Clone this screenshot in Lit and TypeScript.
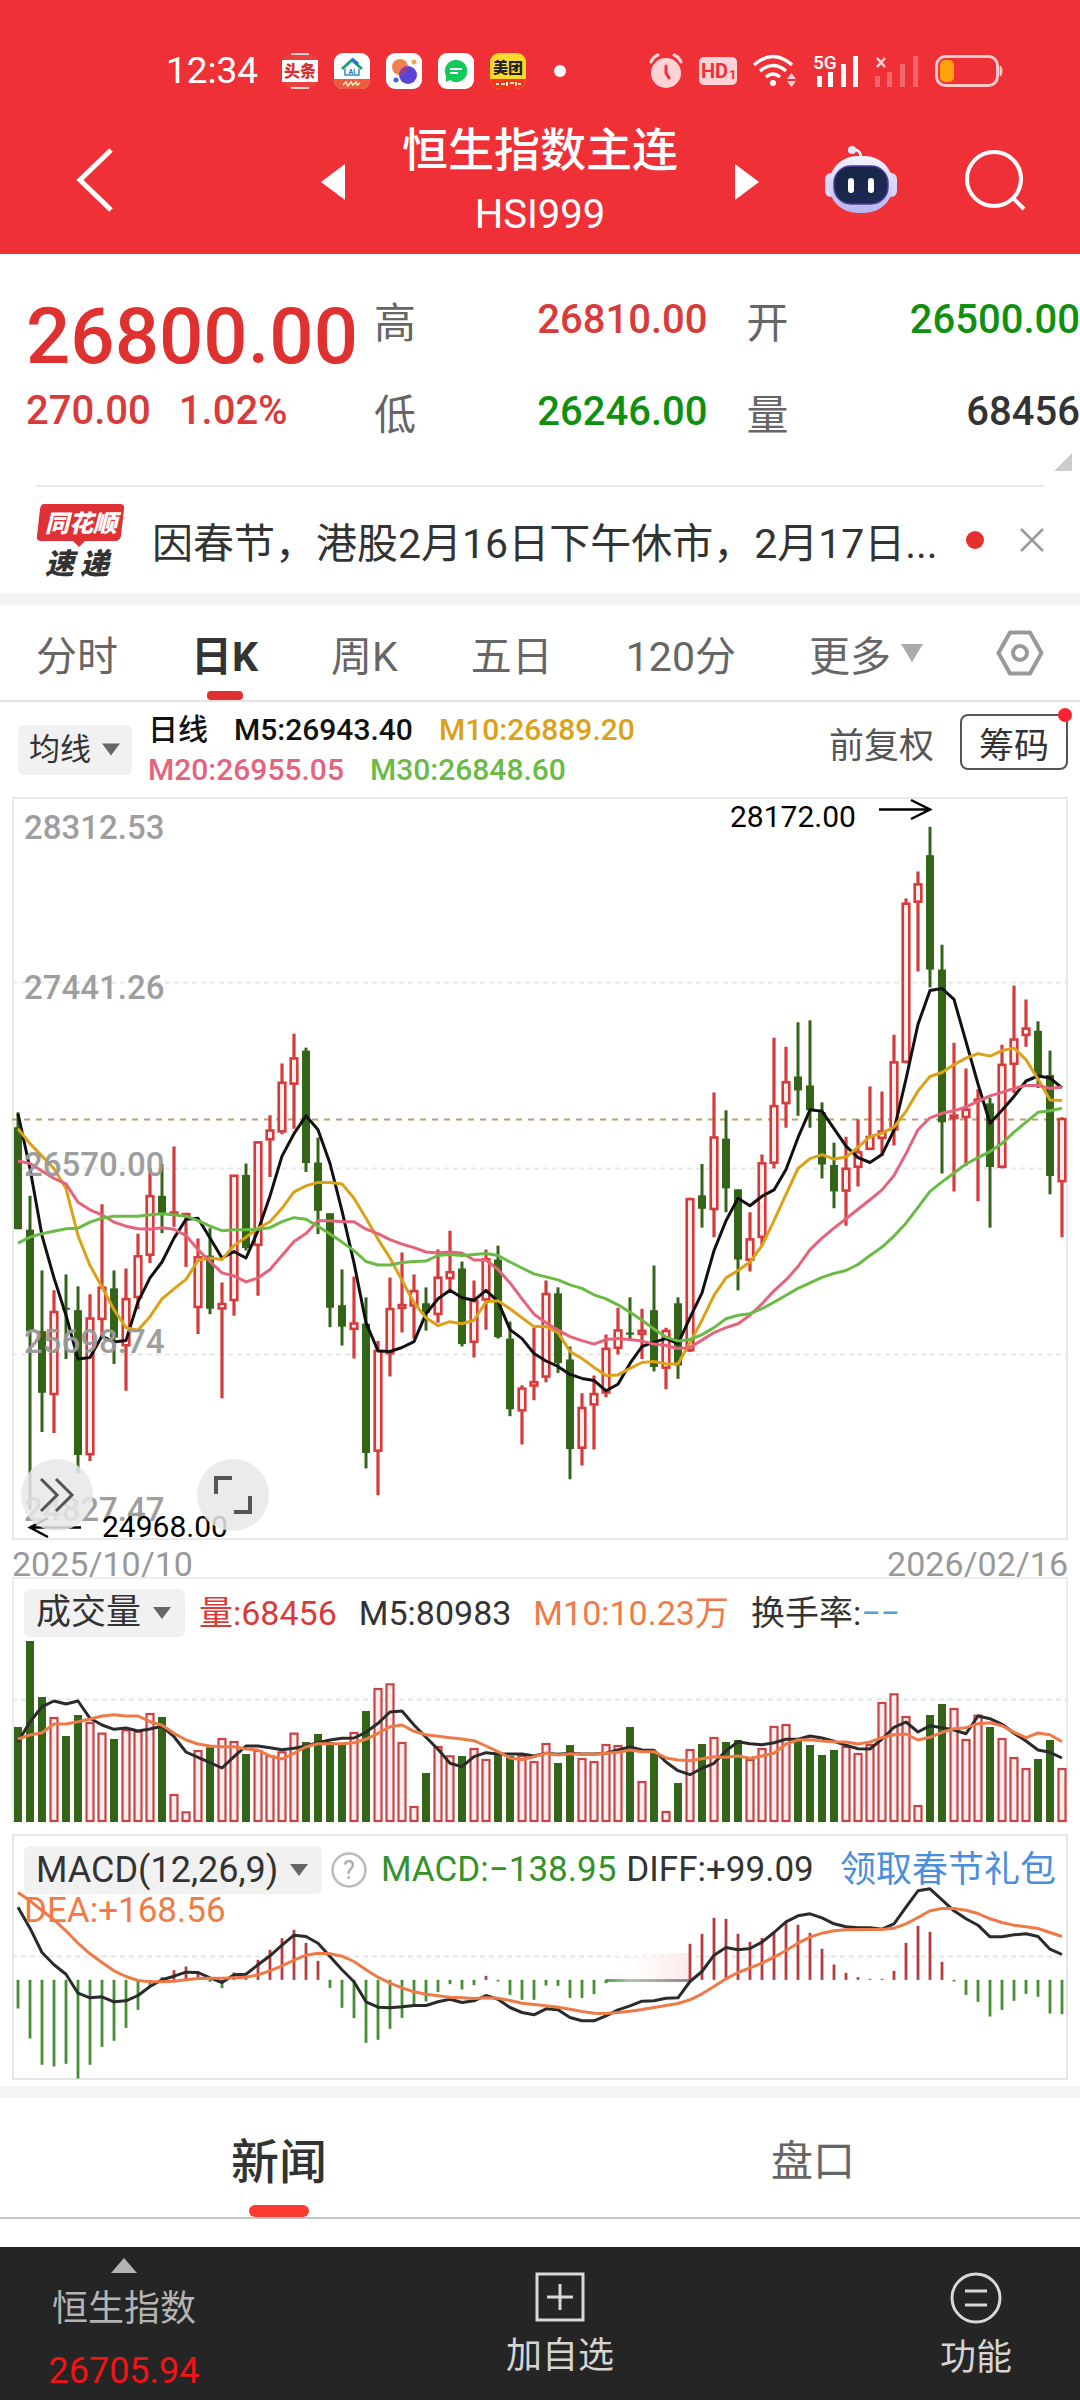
import { LitElement, html, svg, css } from "lit";
import { customElement, state } from "lit/decorators.js";

type Dir = "u" | "d";
type Candle = [Dir, number, number, number, number];

const STEP = 12;
const FIRST = 6;
const cx = (i: number) => FIRST + i * STEP;

/* direction, high, body top, body bottom, low, in plot units */
const CANDLES: Candle[] = [
  ["d", 667, 697, 902, 902], ["d", 835, 903, 1107, 1465], ["d", 985, 1107, 1231, 1310], ["u", 1025, 1067, 1235, 1312],
  ["d", 993, 1060, 1064, 1163], ["d", 1017, 1065, 1356, 1392], ["u", 1033, 1080, 1356, 1368], ["u", 852, 1018, 1084, 1120],
  ["d", 985, 1021, 1120, 1173], ["u", 981, 1041, 1137, 1227], ["u", 911, 955, 1040, 1063], ["u", 780, 834, 955, 970],
  ["d", 771, 835, 870, 910], ["u", 736, 867, 870, 897], ["u", 870, 870, 876, 978], ["u", 921, 957, 1060, 1113],
  ["d", 900, 955, 1062, 1073], ["u", 1009, 1051, 1063, 1242], ["u", 793, 793, 1046, 1076], ["d", 770, 793, 940, 945],
  ["u", 725, 726, 935, 1036], ["u", 673, 702, 723, 797], ["u", 569, 606, 707, 711], ["u", 509, 557, 611, 700],
  ["d", 537, 543, 769, 787], ["d", 718, 768, 865, 912], ["d", 870, 870, 1060, 1099], ["d", 983, 1055, 1098, 1136],
  ["u", 997, 1090, 1104, 1162], ["d", 1039, 1092, 1352, 1383], ["u", 1127, 1145, 1349, 1437], ["u", 999, 1061, 1153, 1198],
  ["u", 949, 1053, 1062, 1110], ["u", 993, 1025, 1057, 1122], ["d", 1019, 1051, 1070, 1106], ["u", 943, 998, 1074, 1090],
  ["u", 905, 987, 1002, 1025], ["d", 967, 981, 1133, 1138], ["u", 1005, 1045, 1130, 1160], ["u", 943, 961, 1045, 1104],
  ["d", 935, 963, 1119, 1122], ["d", 1088, 1122, 1264, 1278], ["u", 1216, 1221, 1268, 1335], ["u", 1100, 1208, 1218, 1246],
  ["u", 1005, 1031, 1200, 1210], ["d", 1019, 1031, 1171, 1191], ["d", 1138, 1164, 1344, 1405], ["u", 1232, 1260, 1343, 1377],
  ["u", 1196, 1232, 1256, 1345], ["u", 1114, 1141, 1232, 1240], ["u", 1060, 1104, 1142, 1154], ["d", 1039, 1110, 1114, 1124],
  ["u", 1062, 1105, 1114, 1163], ["d", 975, 1065, 1179, 1188], ["u", 1100, 1105, 1182, 1224], ["d", 1039, 1051, 1176, 1203],
  ["u", 839, 840, 1147, 1149], ["d", 771, 834, 861, 899], ["u", 627, 716, 863, 918], ["d", 663, 720, 820, 868],
  ["d", 822, 822, 963, 1025], ["u", 868, 921, 965, 987], ["u", 752, 768, 919, 935], ["u", 517, 653, 770, 780],
  ["u", 535, 605, 650, 698], ["d", 486, 595, 623, 674], ["d", 482, 613, 663, 698], ["d", 647, 667, 772, 800],
  ["d", 728, 773, 826, 860], ["u", 716, 779, 826, 895], ["u", 681, 746, 778, 816], ["u", 615, 715, 742, 742],
  ["u", 625, 704, 720, 755], ["u", 511, 565, 703, 734], ["u", 237, 246, 567, 569], ["u", 183, 207, 245, 384],
  ["d", 93, 150, 380, 416], ["d", 330, 380, 687, 790], ["u", 527, 672, 680, 826], ["u", 579, 660, 678, 775],
  ["u", 620, 640, 642, 846], ["d", 638, 649, 777, 899], ["u", 531, 570, 778, 780], ["u", 412, 519, 571, 628],
  ["u", 440, 497, 513, 535], ["d", 484, 503, 594, 618], ["d", 543, 592, 795, 832], ["u", 677, 679, 807, 918],
];

const MA5 = [670, 780, 915, 1000, 1075, 1163, 1160, 1117, 1129, 1126, 1048, 1000, 968, 920, 882, 880, 920, 960, 947, 960, 905, 835, 755, 710, 674, 702, 770, 865, 970, 1090, 1147, 1148, 1140, 1128, 1072, 1042, 1025, 1040, 1045, 1025, 1047, 1104, 1122, 1152, 1167, 1178, 1194, 1202, 1206, 1227, 1214, 1172, 1138, 1129, 1122, 1132, 1080, 1030, 945, 885, 840, 855, 836, 823, 782, 718, 662, 665, 700, 735, 758, 768, 752, 703, 600, 490, 422, 418, 440, 525, 610, 689, 663, 635, 604, 594, 598, 618];
const MA10 = [700, 730, 755, 780, 820, 915, 975, 1018, 1064, 1100, 1105, 1078, 1042, 1022, 1003, 965, 960, 963, 935, 918, 900, 887, 860, 827, 815, 808, 808, 811, 840, 880, 922, 960, 1005, 1050, 1080, 1096, 1088, 1092, 1085, 1048, 1046, 1062, 1080, 1098, 1098, 1110, 1148, 1162, 1180, 1196, 1195, 1182, 1170, 1168, 1173, 1173, 1130, 1085, 1035, 1000, 985, 968, 935, 885, 832, 780, 760, 752, 761, 757, 737, 716, 709, 697, 665, 624, 595, 587, 571, 558, 549, 554, 543, 538, 561, 600, 642, 643];
const MA20 = [765, 770, 785, 800, 811, 848, 863, 873, 888, 896, 901, 902, 899, 902, 915, 943, 967, 990, 996, 1008, 1000, 983, 955, 927, 911, 885, 885, 887, 887, 902, 911, 923, 932, 939, 948, 950, 948, 950, 964, 964, 983, 1010, 1042, 1073, 1090, 1105, 1118, 1126, 1133, 1124, 1122, 1124, 1127, 1133, 1136, 1142, 1140, 1125, 1110, 1100, 1092, 1075, 1052, 1026, 1004, 977, 943, 920, 900, 881, 862, 843, 823, 794, 750, 702, 678, 669, 664, 656, 645, 634, 627, 619, 613, 613, 619, 616];
const MA30 = [930, 918, 911, 906, 901, 900, 888, 880, 876, 876, 876, 873, 871, 873, 876, 885, 896, 905, 903, 903, 902, 899, 887, 879, 882, 896, 912, 928, 945, 967, 974, 974, 969, 967, 966, 955, 953, 955, 953, 951, 955, 968, 980, 992, 998, 1004, 1014, 1021, 1034, 1042, 1054, 1069, 1085, 1103, 1119, 1127, 1124, 1114, 1100, 1082, 1075, 1072, 1062, 1049, 1035, 1021, 1010, 999, 991, 985, 973, 955, 938, 916, 890, 858, 826, 807, 789, 771, 758, 746, 730, 707, 687, 667, 664, 659];

const VOLUME = [561, 303, 471, 531, 588, 525, 546, 578, 597, 568, 572, 519, 531, 762, 814, 630, 622, 594, 603, 642, 630, 645, 634, 578, 606, 582, 606, 612, 576, 513, 444, 430, 606, 798, 699, 618, 646, 648, 624, 657, 645, 648, 645, 663, 609, 669, 615, 654, 663, 612, 615, 561, 723, 636, 813, 729, 627, 612, 591, 606, 600, 657, 624, 558, 552, 600, 615, 645, 630, 618, 639, 612, 486, 460, 528, 795, 525, 492, 504, 597, 524, 561, 594, 651, 684, 657, 600, 684];
const VOL5 = [606, 545, 500, 483, 492, 483, 535, 555, 568, 564, 573, 567, 559, 590, 636, 652, 668, 684, 650, 618, 618, 623, 629, 625, 618, 608, 600, 595, 594, 577, 550, 516, 513, 555, 592, 628, 670, 680, 650, 638, 642, 642, 642, 648, 640, 643, 640, 642, 642, 640, 630, 621, 630, 631, 666, 692, 704, 685, 670, 632, 605, 611, 614, 608, 598, 598, 588, 594, 604, 616, 626, 627, 597, 562, 546, 576, 557, 563, 570, 581, 528, 536, 553, 580, 603, 630, 637, 654];
const VOL10 = [597, 585, 578, 552, 552, 545, 537, 528, 524, 528, 528, 545, 556, 580, 600, 612, 618, 620, 620, 627, 630, 648, 657, 640, 620, 611, 611, 611, 608, 598, 580, 560, 555, 574, 584, 589, 593, 597, 602, 618, 635, 654, 659, 650, 640, 645, 641, 643, 643, 640, 637, 630, 635, 635, 654, 660, 662, 656, 650, 652, 648, 655, 648, 640, 612, 600, 599, 603, 605, 606, 612, 606, 593, 584, 582, 600, 592, 577, 566, 563, 551, 548, 557, 577, 593, 579, 584, 605];

const MACD = [566, 656, 735, 740, 732, 776, 735, 681, 663, 624, 570, 500, 472, 451, 440, 456, 486, 505, 458, 474, 420, 390, 355, 330, 369, 423, 504, 564, 595, 669, 660, 627, 594, 560, 545, 517, 493, 509, 496, 468, 485, 525, 540, 540, 497, 498, 534, 534, 523, 490, 480, 480, 480, 480, 480, 480, 372, 342, 294, 297, 342, 366, 354, 336, 309, 315, 339, 387, 434, 459, 472, 477, 477, 453, 369, 318, 336, 426, 485, 525, 546, 590, 570, 543, 522, 531, 581, 583];
const DIFF = [262, 325, 398, 435, 463, 520, 534, 531, 546, 543, 527, 500, 480, 469, 457, 458, 474, 488, 465, 463, 435, 408, 376, 346, 350, 370, 410, 450, 486, 546, 562, 564, 561, 557, 557, 546, 538, 548, 543, 527, 538, 563, 578, 585, 567, 570, 593, 603, 603, 588, 570, 558, 544, 543, 535, 534, 485, 455, 406, 383, 390, 386, 367, 338, 306, 288, 282, 294, 312, 321, 324, 324, 328, 312, 262, 213, 207, 240, 273, 297, 316, 351, 351, 345, 342, 350, 388, 404];
const DEA = [218, 243, 272, 300, 333, 370, 402, 428, 453, 470, 482, 486, 486, 484, 480, 476, 475, 475, 474, 472, 465, 453, 438, 421, 406, 400, 402, 409, 425, 450, 472, 490, 504, 516, 523, 528, 532, 534, 536, 534, 535, 542, 550, 554, 558, 562, 568, 575, 580, 581, 578, 574, 569, 563, 557, 551, 540, 522, 500, 477, 458, 444, 430, 412, 392, 370, 352, 340, 333, 330, 329, 329, 329, 325, 312, 293, 273, 266, 266, 271, 281, 297, 308, 316, 321, 326, 338, 350];

const priceY = (v: number) => ((v - 34) / 1492) * 742 + 0.5;
const volumeY = (v: number) => (v - 111) / 3;
const macdY = (v: number) => (v - 44) / 3 + 0.5;

const line = (data: number[], y: (v: number) => number) =>
  data.map((v, i) => `${cx(i)},${y(v).toFixed(1)}`).join(" ");

const shared = css`
  :host, * { box-sizing: border-box; }
  button, select {
    margin: 0; padding: 0; border: 0; background: none;
    font: inherit; color: inherit; appearance: none; cursor: pointer;
  }
  a { color: inherit; text-decoration: none; }
  svg { display: block; flex: none; overflow: visible; }
  .picker {
    display: inline-flex; align-items: center; gap: 11px;
    height: 48px; padding: 0 14px 0 12px;
    background: #f1f1f1; border-radius: 6px; color: #333;
  }
`;

const downArrow = svg`<path d="M0 0H18L9 12Z" fill="#666"/>`;

@customElement("status-bar")
class StatusBar extends LitElement {
  static styles = [shared, css`
    :host { display: flex; align-items: center; padding: 49px 77px 0 166px; height: 93px; color: #fff; }
    .time { font-size: 37px; line-height: 44px; margin-right: 24px; }
    .apps { display: flex; gap: 16px; align-items: center; }
    .dot { width: 12px; height: 12px; border-radius: 50%; background: #fff; margin-left: 28px; }
    .system { display: flex; align-items: center; margin-left: auto; gap: 16px; }
  `];
  render() {
    return html`
      <span class="time">12:34</span>
      <div class="apps">
        <svg width="36" height="36" viewBox="0 0 36 36" aria-hidden="true">
          <rect x="1" y="1" width="34" height="34" rx="8" fill="#e8413f"/><path d="M9 1H27M9 35H27" stroke="#fff" stroke-width="1.4"/>
          <path d="M0 7L36 7V29H0Z" fill="#fff"/>
          <text x="18" y="24" text-anchor="middle" font-size="16" font-weight="900" fill="#d8302f">头条</text>
        </svg>
        <svg width="36" height="36" viewBox="0 0 36 36" aria-hidden="true">
          <rect width="36" height="36" rx="9" fill="#fff"/>
          <path d="M8 16L18 7L28 16" fill="none" stroke="#21a07a" stroke-width="3"/><path d="M18 6L24 11" stroke="#2a6fe0" stroke-width="3"/>
          <path d="M11 16V22H25V16" fill="none" stroke="#2a8fd0" stroke-width="1.5"/>
          <text x="18" y="21" text-anchor="middle" font-size="7" font-weight="700" fill="#2a6fb0">AI</text>
          <path d="M0 26H36V27A9 9 0 0 1 27 36H9A9 9 0 0 1 0 27Z" fill="#ee5a3c"/>
          <path d="M9 32l3-3 2 4 3-4 2 3 3-3 1 3 3-2" fill="none" stroke="#ffe9c0" stroke-width="1.6"/>
        </svg>
        <svg width="36" height="36" viewBox="0 0 36 36" aria-hidden="true">
          <rect width="36" height="36" rx="9" fill="#fff"/>
          <circle cx="14" cy="14" r="8" fill="#f0824d"/><circle cx="22" cy="22" r="9" fill="#5a45d8"/>
          <path d="M14 22A9 9 0 0 1 22 13A8 8 0 0 1 14 22Z" fill="#a03a8c"/>
          <circle cx="28" cy="9" r="2.5" fill="#f4a64a"/><circle cx="10" cy="27" r="2.5" fill="#4060d8"/>
        </svg>
        <svg width="36" height="36" viewBox="0 0 36 36" aria-hidden="true">
          <rect width="36" height="36" rx="9" fill="#fff"/>
          <path d="M18 7A11 11 0 1 1 12 27L8 29L8 23A11 11 0 0 1 18 7Z" fill="#14c95c"/>
          <path d="M12 16H24M12 20H20" stroke="#fff" stroke-width="2"/>
        </svg>
        <svg width="36" height="36" viewBox="0 0 36 36" aria-hidden="true">
          <rect width="36" height="36" rx="9" fill="#ffd92e"/>
          <text x="18" y="20" text-anchor="middle" font-size="15" font-weight="900" fill="#222">美团</text>
          <path d="M0 26H36V27A9 9 0 0 1 27 36H9A9 9 0 0 1 0 27Z" fill="#f0361f"/>
          <path d="M6 31h3m2 0h4m2-2v4m3-3h4m2-1v4m2-2h3" stroke="#ffe9c0" stroke-width="2"/>
        </svg>
      </div>
      <span class="dot"></span>
      <div class="system">
        <svg width="34" height="36" viewBox="0 0 34 36" fill="none" stroke="#ffd3d5" aria-label="alarm">
          <circle cx="17" cy="20" r="15" fill="#ffd3d5" stroke="none"/>
          <path d="M2 9Q4 4 9 2M32 9Q30 4 25 2" stroke-width="3" stroke-linecap="round"/>
          <path d="M17 13V20L20 25" stroke="#f03037" stroke-width="3" stroke-linecap="round"/>
        </svg>
        <svg width="38" height="28" viewBox="0 0 38 28" aria-hidden="true">
          <rect width="38" height="28" rx="5" fill="#ffd3d5"/>
          <text x="2" y="21" font-size="20" font-weight="700" fill="#f03037">HD</text>
          <text x="30" y="22" font-size="13" font-weight="700" fill="#f03037">1</text>
        </svg>
        <svg width="44" height="34" viewBox="0 0 44 34" fill="none" stroke="#fff" stroke-width="3.4" aria-label="Wi-Fi">
          <path d="M1 11Q20-6 39 11M7 17Q20 6 33 17M13 23Q20 17 27 23"/>
          <circle cx="20" cy="29" r="3" fill="#fff" stroke="none"/>
          <path d="M34 25L38.500 19L43 25ZM34 27L38.500 33L43 27Z" fill="#ffd3d5" stroke="none"/>
        </svg>
        <svg width="46" height="34" viewBox="0 0 46 34" fill="#fff" aria-label="signal">
          <text x="0" y="15" font-size="19" font-weight="500">5G</text>
          <rect x="4" y="22" width="5" height="11"/><rect x="15" y="18" width="5" height="15"/>
          <rect x="28" y="10" width="5" height="23"/><rect x="40" y="2" width="5" height="31"/>
        </svg>
        <svg width="44" height="34" viewBox="0 0 44 34" aria-label="no signal">
          <path d="M2 4L10 13M10 4L2 13" stroke="#ffd3d5" stroke-width="2.600"/>
          <g fill="#f5666b"><rect x="0" y="22" width="5" height="11"/><rect x="12" y="18" width="5" height="15"/>
          <rect x="25" y="10" width="5" height="23"/><rect x="38" y="2" width="5" height="31"/></g>
        </svg>
        <svg width="68" height="32" viewBox="0 0 68 32" aria-label="battery">
          <rect x="1.500" y="1.500" width="61" height="29" rx="9" fill="none" stroke="#ffc9cb" stroke-width="3"/>
          <path d="M65 11Q67 11 67 16Q67 21 65 21Z" fill="#ffc9cb" stroke="#ffc9cb"/>
          <rect x="5" y="5" width="14" height="22" rx="5" fill="#ffa20d"/>
        </svg>
      </div>`;
  }
}

@customElement("title-bar")
class TitleBar extends LitElement {
  static styles = [shared, css`
    :host { display: grid; grid-template-columns: 1fr auto 1fr; align-items: center; padding: 0 54px; color: #fff; height: 161px; }
    .middle { display: flex; align-items: center; gap: 55px; }
    .names { text-align: center; width: 280px; padding-top: 16px; }
    h1 { margin: 0; font-size: 46px; font-weight: 500; line-height: 66px; white-space: nowrap; }
    .code { font-size: 40px; line-height: 64px; }
    .tools { display: flex; align-items: center; justify-content: flex-end; gap: 66px; }
    .arrow { padding-top: 16px; }
    .end { padding-top: 12px; }
    .back { padding-left: 22px; justify-self: start; }
  `];
  render() {
    return html`
      <button class="end back" aria-label="返回"><svg width="38" height="66" viewBox="0 0 38 66"><path d="M35 3L4 33L35 63" fill="none" stroke="#fff" stroke-width="5"/></svg></button>
      <div class="middle">
        <button class="arrow" aria-label="上一个"><svg width="24" height="36" viewBox="0 0 24 36"><path d="M24 0V36L0 18Z" fill="#fff"/></svg></button>
        <div class="names"><h1>恒生指数主连</h1><div class="code">HSI999</div></div>
        <button class="arrow" aria-label="下一个"><svg width="24" height="36" viewBox="0 0 24 36"><path d="M0 0V36L24 18Z" fill="#fff"/></svg></button>
      </div>
      <div class="tools end">
        <button aria-label="智能助手">
          <svg width="74" height="68" viewBox="0 0 74 68">
            <defs><linearGradient id="shell" x1="0" y1="0" x2="0" y2="1"><stop offset="0" stop-color="#f6f4ff"/><stop offset="1" stop-color="#b6b4ef"/></linearGradient>
            <linearGradient id="face" x1="0" y1="0" x2="1" y2="1"><stop offset="0" stop-color="#16243f"/><stop offset="1" stop-color="#1f2a5a"/></linearGradient></defs>
            <path d="M37 12Q37 4 29 3" fill="none" stroke="#fff" stroke-width="2.500"/><circle cx="28" cy="4" r="4" fill="#e8e6ff"/>
            <rect x="1" y="27" width="12" height="24" rx="6" fill="#d9d7fb"/><rect x="61" y="27" width="12" height="24" rx="6" fill="#d9d7fb"/>
            <rect x="5" y="10" width="64" height="57" rx="28" fill="url(#shell)"/>
            <rect x="10" y="20" width="54" height="38" rx="17" fill="url(#face)" stroke="#4a3f9c" stroke-width="1.500"/>
            <rect x="24" y="32" width="6" height="15" rx="3" fill="#fff"/><rect x="44" y="32" width="6" height="15" rx="3" fill="#fff"/>
          </svg>
        </button>
        <button aria-label="搜索"><svg width="62" height="62" viewBox="0 0 62 62" fill="none" stroke="#fff" stroke-width="4"><circle cx="30" cy="30" r="27"/><path d="M49 49L60 60"/></svg></button>
      </div>`;
  }
}

@customElement("quote-panel")
class QuotePanel extends LitElement {
  static styles = [shared, css`
    :host { display: block; }
    .quote { display: flex; position: relative; height: 231px; }
    .last { flex: none; width: 374px; padding: 37px 0 0 26px; color: #e03131; }
    .price { font-size: 78px; font-weight: 500; line-height: 92px; }
    .change { display: flex; gap: 28px; font-size: 40px; font-weight: 500; line-height: 56px; color: #d93a3a; }
    dl { flex: 1; margin: 0; padding-top: 19px; display: grid; grid-template-columns: 1fr 1fr; grid-auto-rows: 92px; column-gap: 39px; }
    dl div { display: flex; justify-content: space-between; align-items: center; }
    dt { font-size: 42px; color: #666; }
    dd { margin: 0; font-size: 40px; font-weight: 500; color: #333; }
    dd.up { color: #d93a3a; }
    dd.down { color: #109010; }
    .corner { position: absolute; right: 8px; bottom: 14px; }
    .news { display: flex; align-items: center; margin: 0 36px; border-top: 2px solid #ebebeb; height: 108px; color: #333; }
    .news a { font-size: 41px; margin-left: 26px; flex: 1; white-space: nowrap; }
    .dot { flex: none; width: 18px; height: 18px; border-radius: 50%; background: #e53030; margin: 0 36px 0 16px; }
  `];
  render() {
    return html`
      <div class="quote">
        <div class="last">
          <div class="price">26800.00</div>
          <div class="change"><span>270.00</span><span>1.02%</span></div>
        </div>
        <dl>
          <div><dt>高</dt><dd class="up">26810.00</dd></div>
          <div><dt>开</dt><dd class="down">26500.00</dd></div>
          <div><dt>低</dt><dd class="down">26246.00</dd></div>
          <div><dt>量</dt><dd>68456</dd></div>
        </dl>
        <svg class="corner" width="18" height="18" viewBox="0 0 18 18" aria-hidden="true"><path d="M18 0V18H0Z" fill="#ccc"/></svg>
      </div>
      <div class="news">
        <svg width="90" height="74" viewBox="0 0 90 74" aria-hidden="true">
          <path d="M8 1H84Q89 1 88 6L85 33Q84 38 79 38H49L43 44L37 38H5Q0 38 1 33L4 6Q5 1 8 1Z" fill="#e03136"/>
          <text x="45" y="29" text-anchor="middle" font-size="24" font-weight="900" font-style="italic" fill="#fff">同花顺</text>
          <text x="9" y="71" font-size="29" font-weight="900" font-style="italic" fill="#333">速</text>
          <text x="44" y="71" font-size="29" font-weight="900" font-style="italic" fill="#333">递</text>
        </svg>
        <a href="#">因春节，港股2月16日下午休市，2月17日...</a>
        <span class="dot"></span>
        <button aria-label="关闭"><svg width="24" height="24" viewBox="0 0 24 24"><path d="M1 1L23 23M23 1L1 23" stroke="#999" stroke-width="2.500"/></svg></button>
      </div>`;
  }
}

@customElement("period-tabs")
class PeriodTabs extends LitElement {
  @state() private active = "日K";
  static styles = [shared, css`
    :host { display: flex; justify-content: space-between; align-items: stretch; height: 97px; padding: 0 36px; border-bottom: 2px solid #e4e4e4; color: #666; font-size: 41px; }
    button { display: flex; align-items: center; gap: 10px; position: relative; }
    .on { color: #333; font-weight: 700; }
    .on::after { content: ""; position: absolute; left: 50%; bottom: 0; width: 36px; height: 9px; margin-left: -18px; border-radius: 4px; background: #e03131; }
  `];
  render() {
    return html`
      ${["分时", "日K", "周K", "五日", "120分"].map(
        (t) => html`<button class=${t === this.active ? "on" : ""} @click=${() => (this.active = t)}>${t}</button>`
      )}
      <button>更多<svg width="22" height="18" viewBox="0 0 22 18" aria-hidden="true"><path d="M0 0H22L11 18Z" fill="#aaa"/></svg></button>
      <button aria-label="设置"><svg width="48" height="46" viewBox="0 0 48 46" fill="none" stroke="#999" stroke-width="4"><path d="M14 2.500H34L45.500 23L34 43.500H14L2.500 23Z" stroke-linejoin="round"/><circle cx="24" cy="23" r="7"/></svg></button>`;
  }
}

@customElement("price-chart")
class PriceChart extends LitElement {
  static styles = [shared, css`
    :host { display: block; }
    .head { display: flex; align-items: center; height: 95px; padding: 0 12px 0 18px; }
    .head .picker { height: 50px; padding: 0 12px 0 11px; font-size: 31px; }
    .legend { display: grid; margin-left: 16px; font-size: 30px; font-weight: 500; line-height: 40px; white-space: nowrap; }
    .row { display: flex; gap: 26px; }
    .m5 { color: #111; } .m10 { color: #dba117; } .m20 { color: #e5637b; } .m30 { color: #69bb45; }
    .tools { margin-left: auto; align-self: flex-start; margin-top: 12px; display: flex; align-items: center; gap: 26px; font-size: 35px; color: #555; }
    .chip { position: relative; height: 56px; width: 108px; border: 2px solid #555; border-radius: 8px; color: #333; }
    .chip::after { content: ""; position: absolute; right: -6px; top: -8px; width: 14px; height: 14px; border-radius: 50%; background: #fb2433; }
    .plot { position: relative; margin: 0 12px; }
    .plot svg.canvas { width: 100%; height: auto; }
    .axis { font-size: 33px; font-weight: 500; fill: #999; }
    .note { font-size: 30px; fill: #000; }
    .round { position: absolute; bottom: 9px; width: 72px; height: 72px; border-radius: 50%; background: rgba(232, 232, 232, 0.85); display: grid; place-items: center; }
    .more { left: 9px; } .full { left: 185px; }
    .dates { display: flex; justify-content: space-between; padding: 11px 12px 0; height: 37px; font-size: 34px; line-height: 26px; color: #999; }
  `];
  render() {
    return html`
      <div class="head">
        <label class="picker"><select aria-label="均线"><option>均线</option></select><svg width="18" height="13" viewBox="0 0 18 12" aria-hidden="true">${downArrow}</svg></label>
        <div class="legend">
          <div class="row"><span class="m5">日线</span><span class="m5">M5:26943.40</span><span class="m10">M10:26889.20</span></div>
          <div class="row"><span class="m20">M20:26955.05</span><span class="m30">M30:26848.60</span></div>
        </div>
        <div class="tools"><button>前复权</button><button class="chip">筹码</button></div>
      </div>
      <div class="plot">
        <svg class="canvas" viewBox="0 0 1056 743" role="img" aria-label="日K线图">
          <rect x="1" y="1" width="1054" height="741" fill="none" stroke="#e8eaea" stroke-width="2"/>
          <path d="M0 185.500H1056M0 371.500H1056M0 557.500H1056" stroke="#e6e8e8" stroke-width="2" stroke-dasharray="5 4"/>
          <path d="M0 322.500H1056" stroke="#b9a077" stroke-width="2" stroke-dasharray="6 6"/>
          ${CANDLES.map(([dir, hi, top, bot, lo], i) => {
            const x = cx(i);
            const t = priceY(top);
            const h = Math.max(priceY(bot) - t, 2);
            return dir === "d"
              ? svg`<path d="M${x} ${priceY(hi)}V${priceY(lo)}" stroke="#336418" stroke-width="3"/><rect x=${x - 4} y=${t} width="8" height=${h} fill="#336418"/>`
              : svg`<path d="M${x} ${priceY(hi)}V${t}M${x} ${t + h}V${priceY(lo)}" stroke="#d63b3b" stroke-width="3.2"/>
                  <rect x=${x - 3.3} y=${t + 0.8} width="6.6" height=${Math.max(h - 1.6, 1)} fill="#ffecec" stroke="#d63b3b" stroke-width="2.6"/>`;
          })}
          <g fill="none" stroke-width="3" stroke-linejoin="round">
            <polyline points=${line(MA5, priceY)} stroke="#111"/>
            <polyline points=${line(MA10, priceY)} stroke="#dba117"/>
            <polyline points=${line(MA20, priceY)} stroke="#e5637b"/>
            <polyline points=${line(MA30, priceY)} stroke="#69bb45"/>
          </g>
          <g class="axis" opacity="0.95">
            <text x="12" y="42">28312.53</text><text x="12" y="202">27441.26</text><text x="12" y="379">26570.00</text>
            <text x="12" y="556">25698.74</text><text x="12" y="724">24827.47</text>
          </g>
          <text class="note" x="718" y="30">28172.00</text>
          <path d="M867 12.500H917M899 3L918 12.500L899 22" fill="none" stroke="#000" stroke-width="2.500"/>
          <text class="note" x="90" y="740">24968.00</text>
          <path d="M69 730.500H19M36 721L18 730.500L36 740" fill="none" stroke="#000" stroke-width="2.500"/>
        </svg>
        <button class="round more" aria-label="展开"><svg width="36" height="36" viewBox="0 0 36 36" fill="none" stroke="#555" stroke-width="3"><path d="M2 2L18 18L2 34M17 2L33 18L17 34"/></svg></button>
        <button class="round full" aria-label="全屏"><svg width="38" height="38" viewBox="0 0 38 38" fill="none" stroke="#555" stroke-width="4"><path d="M2 18V2H18M20 36H36V20"/></svg></button>
      </div>
      <div class="dates"><span>2025/10/10</span><span>2026/02/16</span></div>`;
  }
}

@customElement("indicator-panels")
class IndicatorPanels extends LitElement {
  static styles = [shared, css`
    :host { display: grid; gap: 11px; padding: 0 12px 6px; }
    .panel { display: grid; }
    .panel > * { grid-area: 1 / 1; }
    .canvas { width: 100%; height: auto; }
    .legend { display: flex; flex-wrap: wrap; align-items: center; align-content: flex-start; padding: 12px 12px 0; font-size: 35px; line-height: 48px; color: #333; white-space: nowrap; }
    .items { display: flex; gap: 22px; margin-left: 14px; font-size: 34px; }
    .macd { font-size: 36px; }
    .macd .items { gap: 10px; font-size: 35px; }
    .help { margin-left: 9px; }
    .dea { flex-basis: 100%; font-size: 35px; line-height: 34px; color: #f27b45; }
    .red { color: #d93a3a; } .orange { color: #ee7a48; } .blue { color: #4aa5d6; } .green { color: #35922a; }
    .gift { margin-left: auto; color: #4b8fdc; }
  `];
  render() {
    return html`
      <div class="panel">
        <svg class="canvas" viewBox="0 0 1056 246" role="img" aria-label="成交量">
          <path d="M1 246V1H1055V246" fill="none" stroke="#ececec" stroke-width="2"/>
          <path d="M0 122.500H1056" stroke="#e4e6e6" stroke-width="2" stroke-dasharray="5 4"/>
          ${VOLUME.map((v, i) => {
            const y = volumeY(v);
            return CANDLES[i][0] === "d"
              ? svg`<rect x=${cx(i) - 4} y=${y} width="8" height=${245 - y} fill="#336418"/>`
              : svg`<rect x=${cx(i) - 3.5} y=${y + 1} width="7" height=${243 - y} fill="#ffecec" stroke="#c84444" stroke-width="2.2"/>`;
          })}
          <g fill="none" stroke-width="3" stroke-linejoin="round">
            <polyline points=${line(VOL5, volumeY)} stroke="#2b2b2b"/>
            <polyline points=${line(VOL10, volumeY)} stroke="#ee7a48"/>
          </g>
        </svg>
        <div class="legend">
          <label class="picker"><select aria-label="指标"><option>成交量</option></select><svg width="18" height="12" viewBox="0 0 18 12" aria-hidden="true">${downArrow}</svg></label>
          <div class="items"><span class="red">量:68456</span><span>M5:80983</span><span class="orange">M10:10.23万</span><span>换手率:<span class="blue">−−</span></span></div>
        </div>
      </div>
      <div class="panel">
        <svg class="canvas" viewBox="0 0 1056 246" role="img" aria-label="MACD">
          <defs>
            <linearGradient id="haze" x1="0" y1="0" x2="1" y2="0"><stop offset="0" stop-color="#fff" stop-opacity="0"/><stop offset="1" stop-color="#fbe8e8"/></linearGradient>
            <linearGradient id="shade" x1="0" y1="0" x2="1" y2="0"><stop offset="0" stop-color="#5a9a50"/><stop offset="0.300" stop-color="#b4c4b0"/><stop offset="1" stop-color="#8a8a8a"/></linearGradient>
          </defs>
          <rect x="1" y="1" width="1054" height="244" fill="none" stroke="#e6e6e6" stroke-width="2"/>
          <path d="M0 122.500H1056" stroke="#e4e6e6" stroke-width="2" stroke-dasharray="5 4"/>
          <rect x="594" y="119" width="84" height="26" fill="url(#haze)"/>
          <rect x="594" y="145" width="84" height="3" fill="url(#shade)"/>
          ${MACD.map((v, i) => svg`<path d="M${cx(i)} ${macdY(480)}V${macdY(v)}" stroke=${v > 480 ? "#438f32" : "#b93a3c"} stroke-width="2.800"/>`)}
          <g fill="none" stroke-width="3" stroke-linejoin="round">
            <polyline points=${line(DIFF, macdY)} stroke="#2b2b2b"/>
            <polyline points=${line(DEA, macdY)} stroke="#ee7a48"/>
          </g>
        </svg>
        <div class="legend macd">
          <label class="picker"><select aria-label="指标"><option>MACD(12,26,9)</option></select><svg width="18" height="12" viewBox="0 0 18 12" aria-hidden="true">${downArrow}</svg></label>
          <button class="help" aria-label="说明"><svg width="36" height="36" viewBox="0 0 36 36"><circle cx="18" cy="18" r="16.500" fill="none" stroke="#bbb" stroke-width="2.500"/><text x="18" y="27" text-anchor="middle" font-size="25" fill="#aaa">?</text></svg></button>
          <div class="items"><span class="green">MACD:−138.95</span><span>DIFF:+99.09</span></div>
          <a class="gift" href="#">领取春节礼包</a>
          <span class="dea">DEA:+168.56</span>
        </div>
      </div>`;
  }
}

@customElement("bottom-area")
class BottomArea extends LitElement {
  @state() private tab = "新闻";
  static styles = [shared, css`
    :host { display: flex; flex-direction: column; flex: 1; }
    .tabs { display: grid; grid-template-columns: 1fr 1fr; height: 121px; padding-left: 12px; border-bottom: 2px solid #c4c4c4; }
    .tabs button { position: relative; font-size: 42px; color: #666; }
    .tabs .on { font-size: 48px; font-weight: 500; color: #333; }
    .on::after { content: ""; position: absolute; left: 50%; bottom: 0; width: 60px; height: 12px; margin-left: -30px; border-radius: 6px; background: #fb3a30; }
    .bar { margin-top: auto; height: 153px; background: #252525; color: #d4d4d4; font-size: 36px; display: grid; grid-template-columns: 248px 1fr 208px; }
    .bar button { display: flex; flex-direction: column; align-items: center; justify-content: flex-start; padding-top: 25px; gap: 8px; line-height: 52px; }
    .bar .index { padding-top: 11px; gap: 10px; color: #b4b4b4; }
    .value { color: #f01414; }
  `];
  render() {
    return html`
      <div class="tabs">${["新闻", "盘口"].map((t) => html`<button class=${t === this.tab ? "on" : ""} @click=${() => (this.tab = t)}>${t}</button>`)}</div>
      <nav class="bar">
        <button class="index"><svg width="26" height="15" viewBox="0 0 26 15" aria-hidden="true"><path d="M13 0L26 15H0Z" fill="#b4b4b4"/></svg><span>恒生指数</span><span class="value">26705.94</span></button>
        <button><svg width="50" height="50" viewBox="0 0 50 50" fill="none" stroke="#d8d8d8" stroke-width="3" aria-hidden="true"><path d="M2 2H48V48H2ZM12 25H38M25 12V38"/></svg><span>加自选</span></button>
        <button><svg width="52" height="52" viewBox="0 0 52 52" fill="none" stroke="#d8d8d8" stroke-width="3" aria-hidden="true"><circle cx="26" cy="26" r="24"/><path d="M15 19H37M15 33H37"/></svg><span>功能</span></button>
      </nav>`;
  }
}

@customElement("app-root")
class AppRoot extends LitElement {
  static styles = css`
    :host { display: flex; flex-direction: column; min-height: 100vh; background: #fff; font-family: Roboto, "Noto Sans CJK SC", sans-serif; }
    header { background: #f03037; }
    .band { height: 12px; background: #f4f4f4; }
  `;
  render() {
    return html`
      <header><status-bar></status-bar><title-bar></title-bar></header>
      <quote-panel></quote-panel>
      <div class="band"></div>
      <period-tabs></period-tabs>
      <price-chart></price-chart>
      <indicator-panels></indicator-panels>
      <div class="band"></div>
      <bottom-area></bottom-area>`;
  }
}
